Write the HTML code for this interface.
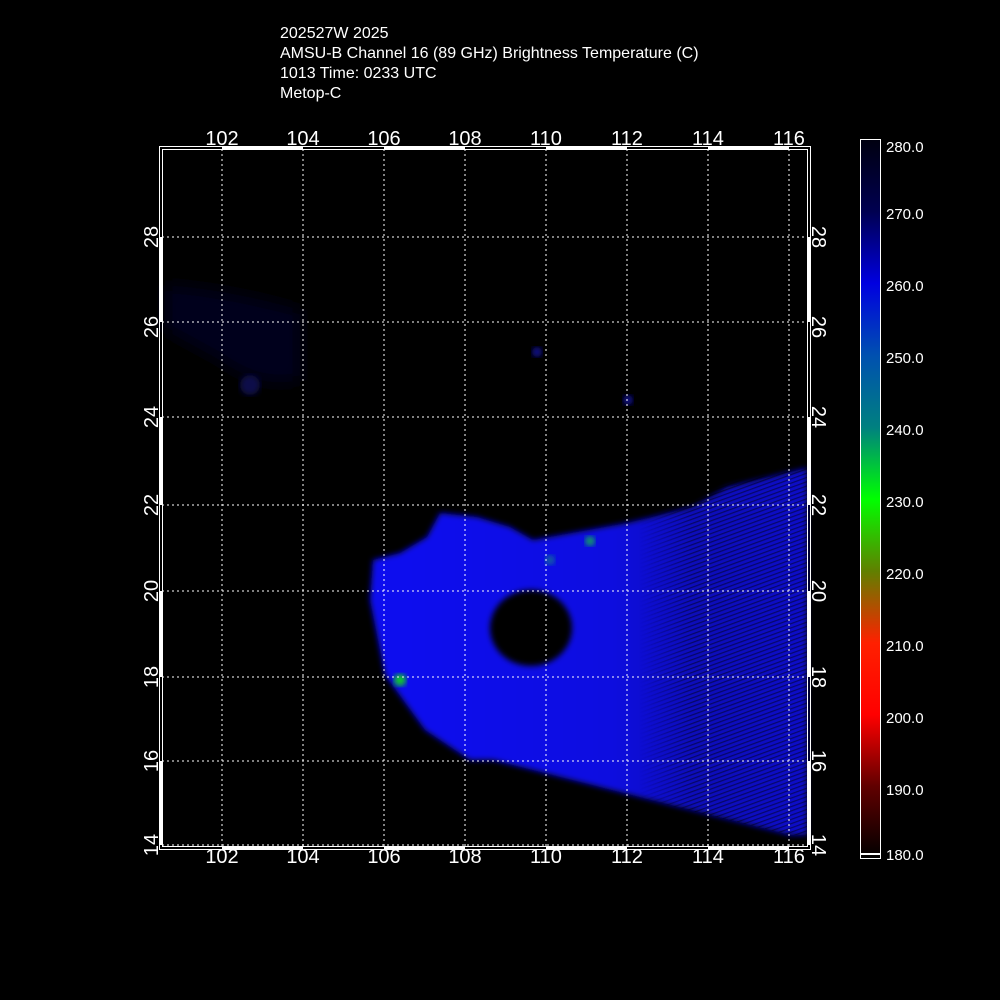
<!DOCTYPE html>
<html><head><style>
html,body{margin:0;padding:0;background:#000;}
body{width:1000px;height:1000px;position:relative;overflow:hidden;font-family:"Liberation Sans",sans-serif;color:#fff;}
.t{position:absolute;left:280px;top:24px;font-size:16px;line-height:20px;}
</style></head><body>
<div class="t">202527W 2025<br>AMSU-B Channel 16 (89 GHz) Brightness Temperature (C)<br>1013 Time: 0233 UTC<br>Metop-C</div>
<svg width="1000" height="1000" style="position:absolute;left:0;top:0" font-family="Liberation Sans, sans-serif">
<defs>
<filter id="b"><feGaussianBlur stdDeviation="3"/></filter>
<filter id="b2"><feGaussianBlur stdDeviation="8"/></filter>
<linearGradient id="g" x1="0" x2="1" y1="0" y2="0">
<stop offset="0" stop-color="#0a0af0"/><stop offset="0.55" stop-color="#0a0ae0"/><stop offset="0.75" stop-color="#0808b8"/><stop offset="1" stop-color="#0a0ac8"/></linearGradient>
<linearGradient id="cb" x1="0" x2="0" y1="0" y2="1">
<stop offset="0" stop-color="#000010"/><stop offset="0.1" stop-color="#000050"/><stop offset="0.2" stop-color="#0000e0"/><stop offset="0.3" stop-color="#0050b0"/><stop offset="0.4" stop-color="#008080"/><stop offset="0.5" stop-color="#00ff00"/><stop offset="0.6" stop-color="#608000"/><stop offset="0.7" stop-color="#ff2000"/><stop offset="0.8" stop-color="#ff0000"/><stop offset="0.9" stop-color="#600000"/><stop offset="1" stop-color="#000000"/></linearGradient>
<linearGradient id="fade" x1="0" x2="1"><stop offset="0" stop-color="#fff" stop-opacity="0"/><stop offset="0.3" stop-color="#fff" stop-opacity="1"/></linearGradient>
<mask id="m"><rect x="640" y="460" width="170" height="380" fill="url(#fade)"/></mask>
<pattern id="st" width="4" height="4" patternUnits="userSpaceOnUse" patternTransform="rotate(70)"><rect width="1.2" height="4" fill="#000" opacity="0.45"/></pattern>
</defs>
<path d="M165 285 Q230 290 300 310 L300 380 Q260 390 220 360 L165 330Z" fill="#03031e" filter="url(#b2)"/>
<circle cx="250" cy="385" r="10" fill="#08084a" filter="url(#b)"/>
<circle cx="537" cy="352" r="5" fill="#0a0a90" filter="url(#b)"/>
<circle cx="628" cy="400" r="5" fill="#0a0a90" filter="url(#b)"/>
<path d="M373 560 L400 553 L427 537 L440 513 L477 517 L510 527 L533 540 L577 532 L627 523 L693 507 L727 487 L807 468 L807 835 L790 835 L493 760 L470 760 L425 730 L385 675 L370 600Z" fill="url(#g)" filter="url(#b)"/>
<path d="M630 500 L807 468 L807 835 L790 835 L630 796Z" fill="url(#st)" mask="url(#m)"/>
<ellipse cx="531" cy="628" rx="41" ry="38" fill="#000" filter="url(#b)"/>
<circle cx="400" cy="680" r="6" fill="#10d020" filter="url(#b)"/>
<circle cx="590" cy="541" r="5" fill="#10a060" filter="url(#b)"/>
<circle cx="550" cy="560" r="5" fill="#1060a0" filter="url(#b)"/>
<g stroke="#fff" stroke-dasharray="2 3" stroke-width="1">
<line x1="222" y1="149" x2="222" y2="846"/><line x1="303" y1="149" x2="303" y2="846"/><line x1="384" y1="149" x2="384" y2="846"/><line x1="465" y1="149" x2="465" y2="846"/><line x1="546" y1="149" x2="546" y2="846"/><line x1="627" y1="149" x2="627" y2="846"/><line x1="708" y1="149" x2="708" y2="846"/><line x1="789" y1="149" x2="789" y2="846"/>
<line x1="162" y1="237" x2="807" y2="237"/><line x1="162" y1="322" x2="807" y2="322"/><line x1="162" y1="417" x2="807" y2="417"/><line x1="162" y1="505" x2="807" y2="505"/><line x1="162" y1="591" x2="807" y2="591"/><line x1="162" y1="677" x2="807" y2="677"/><line x1="162" y1="761" x2="807" y2="761"/><line x1="162" y1="845" x2="807" y2="845"/>
</g>
<rect x="159.5" y="146.5" width="651" height="703" fill="none" stroke="#fff"/>
<rect x="162.5" y="149.5" width="645" height="697" fill="none" stroke="#fff"/>
<g fill="#fff">
<rect x="222" y="146" width="81" height="4"/><rect x="384" y="146" width="81" height="4"/><rect x="546" y="146" width="81" height="4"/><rect x="708" y="146" width="81" height="4"/>
<rect x="222" y="846" width="81" height="4"/><rect x="384" y="846" width="81" height="4"/><rect x="546" y="846" width="81" height="4"/><rect x="708" y="846" width="81" height="4"/>
<rect x="159" y="237" width="4" height="85"/><rect x="159" y="417" width="4" height="88"/><rect x="159" y="591" width="4" height="86"/><rect x="159" y="761" width="4" height="84"/>
<rect x="807" y="237" width="4" height="85"/><rect x="807" y="417" width="4" height="88"/><rect x="807" y="591" width="4" height="86"/><rect x="807" y="761" width="4" height="84"/>
</g>
<g fill="#fff" font-size="20" text-anchor="middle">
<text x="222" y="145">102</text><text x="303" y="145">104</text><text x="384" y="145">106</text><text x="465" y="145">108</text><text x="546" y="145">110</text><text x="627" y="145">112</text><text x="708" y="145">114</text><text x="789" y="145">116</text>
<text x="222" y="863">102</text><text x="303" y="863">104</text><text x="384" y="863">106</text><text x="465" y="863">108</text><text x="546" y="863">110</text><text x="627" y="863">112</text><text x="708" y="863">114</text><text x="789" y="863">116</text>
<text transform="translate(158,237) rotate(-90)">28</text><text transform="translate(158,327) rotate(-90)">26</text><text transform="translate(158,417) rotate(-90)">24</text><text transform="translate(158,505) rotate(-90)">22</text><text transform="translate(158,591) rotate(-90)">20</text><text transform="translate(158,677) rotate(-90)">18</text><text transform="translate(158,761) rotate(-90)">16</text><text transform="translate(158,845) rotate(-90)">14</text>
<text transform="translate(812,237) rotate(90)">28</text><text transform="translate(812,327) rotate(90)">26</text><text transform="translate(812,417) rotate(90)">24</text><text transform="translate(812,505) rotate(90)">22</text><text transform="translate(812,591) rotate(90)">20</text><text transform="translate(812,677) rotate(90)">18</text><text transform="translate(812,761) rotate(90)">16</text><text transform="translate(812,845) rotate(90)">14</text>
</g>
<rect x="860.5" y="139.5" width="20" height="719" fill="url(#cb)" stroke="#fff"/>
<g fill="#fff" font-size="15">
<text x="886" y="152">280.0</text><text x="886" y="219">270.0</text><text x="886" y="291">260.0</text><text x="886" y="363">250.0</text><text x="886" y="435">240.0</text><text x="886" y="507">230.0</text><text x="886" y="579">220.0</text><text x="886" y="651">210.0</text><text x="886" y="723">200.0</text><text x="886" y="795">190.0</text><text x="886" y="860">180.0</text>
</g>
<rect x="860" y="853" width="21" height="2" fill="#fff"/>
</svg>
</body></html>
